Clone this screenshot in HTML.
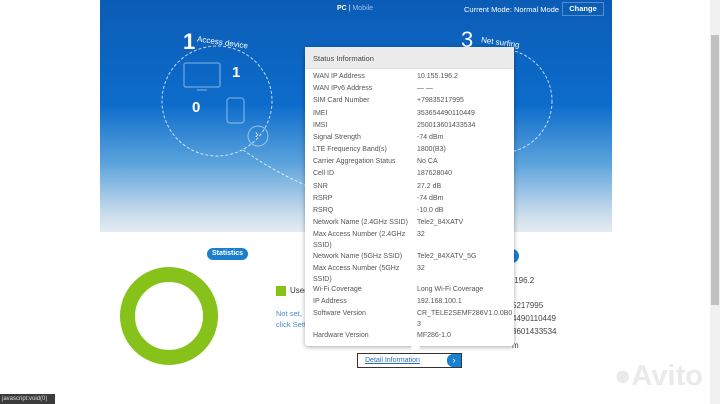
<!DOCTYPE html>
<html><head><meta charset="utf-8"><style>
*{margin:0;padding:0;box-sizing:border-box}
body{width:720px;height:404px;overflow:hidden;background:#fff;font-family:"Liberation Sans",sans-serif;position:relative}
.a{position:absolute;white-space:nowrap}
#hero{position:absolute;left:100px;top:0;width:512px;height:232px;background:linear-gradient(#0b5cb5 0%,#0d6ccb 45%,#5aa2dc 70%,#c9dcec 92%,#e3ebf1 100%)}
.pop{position:absolute;left:305px;top:47px;width:209px;height:299px;background:#fff;border-radius:3px;box-shadow:0 1px 5px rgba(0,0,0,.35)}
.ph{position:absolute;left:0;top:0;width:209px;height:21px;background:#ececec;border-bottom:1px solid #ddd;font-size:7.5px;color:#444;padding:6px 0 0 8px}
.r{position:absolute;font-size:7px;color:#555;line-height:12px;white-space:nowrap}
.l{left:8px;width:100px;white-space:normal}
.v{left:112px}
.sb{position:absolute;left:710px;top:0;width:10px;height:404px;background:#f1f1f1}
</style></head><body>
<div id="hero">
<svg width="512" height="232" style="position:absolute;left:0;top:0" fill="none" stroke="rgba(255,255,255,.75)" stroke-width="1" stroke-dasharray="3 2">
<circle cx="117" cy="101" r="55"/>
<path d="M143 150 Q175 172 205 185"/>
<circle cx="400" cy="101" r="52"/>
<circle cx="158" cy="136" r="10" stroke-dasharray="none" stroke="rgba(255,255,255,.5)"/>
</svg>
<svg width="512" height="232" style="position:absolute;left:0;top:0" fill="none" stroke="rgba(255,255,255,.35)" stroke-width="1.5">
<rect x="84" y="63" width="36" height="24" rx="2"/><path d="M97 90h10"/>
<rect x="127" y="98" width="17" height="25" rx="3"/>
<path d="M395 80a16 16 0 0 1 14 14M395 85a10 10 0 0 1 9 9"/>
</svg>
<div class="a" style="left:83px;top:29px;color:#fff;font-size:22px;font-weight:bold">1</div>
<div class="a" style="left:97px;top:38px;color:#fff;font-size:8px;transform:rotate(8deg)">Access device</div>
<div class="a" style="left:132px;top:64px;color:#fff;font-size:15px;font-weight:bold">1</div>
<div class="a" style="left:92px;top:99px;color:#fff;font-size:15px;font-weight:bold">0</div>
<div class="a" style="left:155px;top:129px;color:#fff;font-size:11px">›</div>
<div class="a" style="left:361px;top:27px;color:#fff;font-size:22px">3</div>
<div class="a" style="left:381px;top:38px;color:#fff;font-size:8px;transform:rotate(8deg)">Net surfing</div>
<div class="a" style="left:237px;top:5px;color:#fff;font-size:7px;font-weight:bold">PC <span style="font-weight:normal">|</span> <span style="color:#9cc3ea;font-weight:normal">Mobile</span></div>
<div class="a" style="left:364px;top:5px;color:#fff;font-size:7.5px">Current Mode: Normal Mode</div>
<div class="a" style="left:462px;top:2px;width:42px;height:14px;border:1px solid rgba(255,255,255,.3);color:#fff;font-size:7.5px;font-weight:bold;text-align:center;line-height:12px">Change</div>
</div>
<div class="a" style="left:207px;top:248px;width:41px;height:12px;background:#1a7fcf;border-radius:6px;color:#fff;font-size:7px;font-weight:bold;text-align:center;line-height:12px">Statistics</div>
<div class="a" style="left:120px;top:267px;width:98px;height:98px;border-radius:50%;border:15px solid #86c21a"></div>
<div class="a" style="left:276px;top:286px;width:10px;height:10px;background:#86c21a"></div>
<div class="a" style="left:290px;top:286px;font-size:8px;color:#333">Used</div>
<div class="a" style="left:276px;top:308px;font-size:7.5px;color:#4a8ac8;line-height:11px">Not set,<br>click Sett</div>
<div class="a" style="left:505px;top:249px;width:14px;height:14px;border-radius:50%;background:#1a7fcf"></div>
<div class="r" style="left:512px;top:275px;font-size:8px;color:#444">.196.2</div>
<div class="r" style="left:512px;top:300px;font-size:8px;color:#444">5217995</div>
<div class="r" style="left:512px;top:313px;font-size:8px;color:#444">4490110449</div>
<div class="r" style="left:512px;top:326px;font-size:8px;color:#444">3601433534</div>
<div class="r" style="left:512px;top:340px;font-size:8px;color:#444">m</div>
<div class="a" style="left:357px;top:353px;width:105px;height:15px;border:1px solid #333;font-size:7px;color:#2a6ebb;text-decoration:underline;padding:3px 0 0 7px">Detail Information</div>
<div class="a" style="left:447px;top:354px;width:14px;height:13px;background:#1a7fcf;border-radius:6px 0 0 6px;color:#fff;font-size:9px;text-align:center;line-height:13px">›</div>
<div class="pop"><div class="ph" style="height:22px;padding-top:7px">Status Information</div>
<div class="r l" style="top:24px">WAN IP Address</div><div class="r v" style="top:24px">10.155.196.2</div>
<div class="r l" style="top:36px">WAN IPv6 Address</div><div class="r v" style="top:36px">— —</div>
<div class="r l" style="top:48px">SIM Card Number</div><div class="r v" style="top:48px">+79835217995</div>
<div class="r l" style="top:61px">IMEI</div><div class="r v" style="top:61px">353654490110449</div>
<div class="r l" style="top:73px">IMSI</div><div class="r v" style="top:73px">250013601433534</div>
<div class="r l" style="top:85px">Signal Strength</div><div class="r v" style="top:85px">-74 dBm</div>
<div class="r l" style="top:97px">LTE Frequency Band(s)</div><div class="r v" style="top:97px">1800(B3)</div>
<div class="r l" style="top:109px">Carrier Aggregation Status</div><div class="r v" style="top:109px">No CA</div>
<div class="r l" style="top:121px">Cell ID</div><div class="r v" style="top:121px">187628040</div>
<div class="r l" style="top:134px">SNR</div><div class="r v" style="top:134px">27.2 dB</div>
<div class="r l" style="top:146px">RSRP</div><div class="r v" style="top:146px">-74 dBm</div>
<div class="r l" style="top:158px">RSRQ</div><div class="r v" style="top:158px">-10.0 dB</div>
<div class="r l" style="top:170px">Network Name (2.4GHz SSID)</div><div class="r v" style="top:170px">Tele2_84XATV</div>
<div class="r l" style="top:182px;line-height:11px">Max Access Number (2.4GHz SSID)</div><div class="r v" style="top:182px">32</div>
<div class="r l" style="top:204px">Network Name (5GHz SSID)</div><div class="r v" style="top:204px">Tele2_84XATV_5G</div>
<div class="r l" style="top:216px;line-height:11px">Max Access Number (5GHz SSID)</div><div class="r v" style="top:216px">32</div>
<div class="r l" style="top:237px">Wi-Fi Coverage</div><div class="r v" style="top:237px">Long Wi-Fi Coverage</div>
<div class="r l" style="top:249px">IP Address</div><div class="r v" style="top:249px">192.168.100.1</div>
<div class="r l" style="top:261px">Software Version</div><div class="r v" style="top:261px;white-space:normal;width:92px;line-height:11px">CR_TELE2SEMF286V1.0.0B0 3</div>
<div class="r l" style="top:283px">Hardware Version</div><div class="r v" style="top:283px">MF286-1.0</div>
</div>
<div class="a" style="left:412px;top:344px;width:7px;height:7px;background:#fff;transform:rotate(45deg)"></div>
<div class="a" style="left:614px;top:360px;font-size:29px;font-weight:bold;color:rgba(232,232,232,.9)">●Avito</div>
<div class="sb"><div class="a" style="left:1px;top:35px;width:8px;height:270px;background:#c1c1c1"></div></div>
<div class="a" style="left:0;top:394px;width:55px;height:10px;background:#3b3b3b;color:#ddd;font-size:6px;line-height:10px;padding-left:2px">javascript:void(0)</div>
</body></html>
